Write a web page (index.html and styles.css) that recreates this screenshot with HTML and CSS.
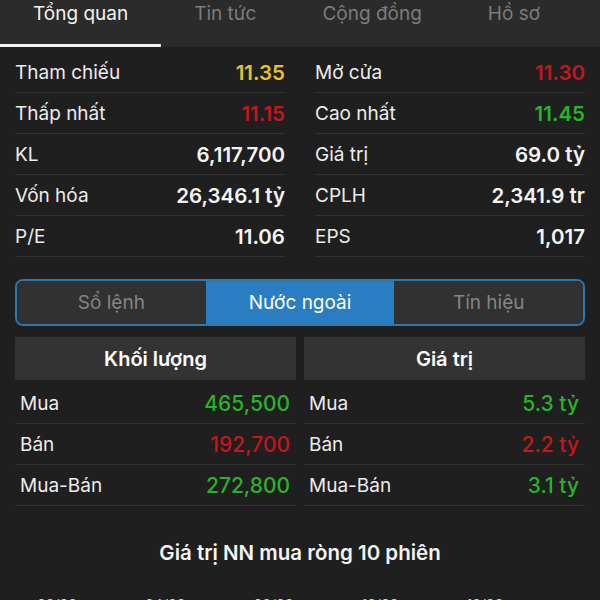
FILE: index.html
```html
<!DOCTYPE html>
<html lang="vi">
<head>
    <meta charset="UTF-8">
    <meta name="viewport" content="width=device-width, initial-scale=1.0">
    <title>Tổng quan</title>
    <link rel="stylesheet" href="styles.css">
</head>
<body>
    <div class="tabs">
        <div class="tab active">Tổng quan</div>
        <div class="tab">Tin tức</div>
        <div class="tab">Cộng đồng</div>
        <div class="tab">Hồ sơ</div>
    </div>

    <div class="stats">
        <div class="row"><span>Tham chiếu</span><b class="yellow">11.35</b></div>
        <div class="row"><span>Mở cửa</span><b class="red">11.30</b></div>
        <div class="row"><span>Thấp nhất</span><b class="red">11.15</b></div>
        <div class="row"><span>Cao nhất</span><b class="green">11.45</b></div>
        <div class="row"><span>KL</span><b>6,117,700</b></div>
        <div class="row"><span>Giá trị</span><b>69.0 tỷ</b></div>
        <div class="row"><span>Vốn hóa</span><b>26,346.1 tỷ</b></div>
        <div class="row"><span>CPLH</span><b>2,341.9 tr</b></div>
        <div class="row"><span>P/E</span><b>11.06</b></div>
        <div class="row"><span>EPS</span><b>1,017</b></div>
    </div>

    <div class="segment">
        <div class="seg">Sổ lệnh</div>
        <div class="seg active">Nước ngoài</div>
        <div class="seg">Tín hiệu</div>
    </div>

    <div class="foreign">
        <div class="col">
            <div class="head">Khối lượng</div>
            <div class="row"><span>Mua</span><span class="num green">465,500</span></div>
            <div class="row"><span>Bán</span><span class="num red">192,700</span></div>
            <div class="row"><span>Mua-Bán</span><span class="num green">272,800</span></div>
        </div>
        <div class="col">
            <div class="head">Giá trị</div>
            <div class="row"><span>Mua</span><span class="num green">5.3 tỷ</span></div>
            <div class="row"><span>Bán</span><span class="num red">2.2 tỷ</span></div>
            <div class="row"><span>Mua-Bán</span><span class="num green">3.1 tỷ</span></div>
        </div>
    </div>

    <h3 class="chart-title">Giá trị NN mua ròng 10 phiên</h3>
    <div class="axis">
        <span>03/03</span>
        <span>04/03</span>
        <span>08/03</span>
        <span>10/03</span>
        <span>12/03</span>
    </div>
</body>
</html>
```

FILE: styles.css
```css
* {
    padding: 0;
    margin: 0;
    box-sizing: border-box;
}
body {
    font-family: Inter, "Noto Sans", sans-serif;
    background-color: #1f1f1f;
    color: #ececec;
    height: 600px;
    overflow: hidden;
    font-size: 19px;
}
.tabs {
    display: flex;
    height: 47px;
    background-color: #2b2b2b;
}
.tab {
    padding: 0 33px;
    line-height: 28px;
    color: #7c7c7c;
}
.tab.active {
    color: #f2f2f2;
    border-bottom: 3px solid #f2f2f2;
}
.stats {
    display: grid;
    grid-template-columns: 1fr 1fr;
    column-gap: 30px;
    padding: 5px 15px 0;
}
.row {
    display: flex;
    justify-content: space-between;
    align-items: center;
    height: 41px;
    border-bottom: 1px solid #333;
}
.row b {
    font-size: 20.5px;
    font-weight: 600;
    color: #f4f4f4;
}
.row .num {
    font-size: 21px;
    font-weight: 500;
}
.yellow {
    color: #e6c12b !important;
}
.red {
    color: #c3161d !important;
}
.green {
    color: #27b427 !important;
}
.segment {
    display: flex;
    margin: 22px 15px 0;
    height: 47px;
    border: 2px solid #2b77ae;
    border-radius: 8px;
    overflow: hidden;
}
.seg {
    flex: 1;
    display: flex;
    justify-content: center;
    align-items: center;
    background-color: #313131;
    color: #858585;
}
.seg.active {
    background-color: #2a7dc1;
    color: #fff;
}
.foreign {
    display: flex;
    gap: 8px;
    margin: 11px 15px 0;
}
.col {
    flex: 1;
}
.head {
    height: 43px;
    margin-bottom: 3px;
    background-color: #333;
    display: flex;
    justify-content: center;
    align-items: center;
    font-size: 20px;
    font-weight: 600;
    color: #fff;
}
.col .row {
    padding: 0 6px 0 5px;
}
.chart-title {
    margin-top: 34px;
    text-align: center;
    font-size: 20.5px;
    font-weight: 600;
    color: #f4f4f4;
}
.axis {
    display: flex;
    padding: 0 0 0 37px;
    gap: 68px;
    margin-top: 31px;
    font-size: 14px;
    color: #d0d0d0;
}
```
